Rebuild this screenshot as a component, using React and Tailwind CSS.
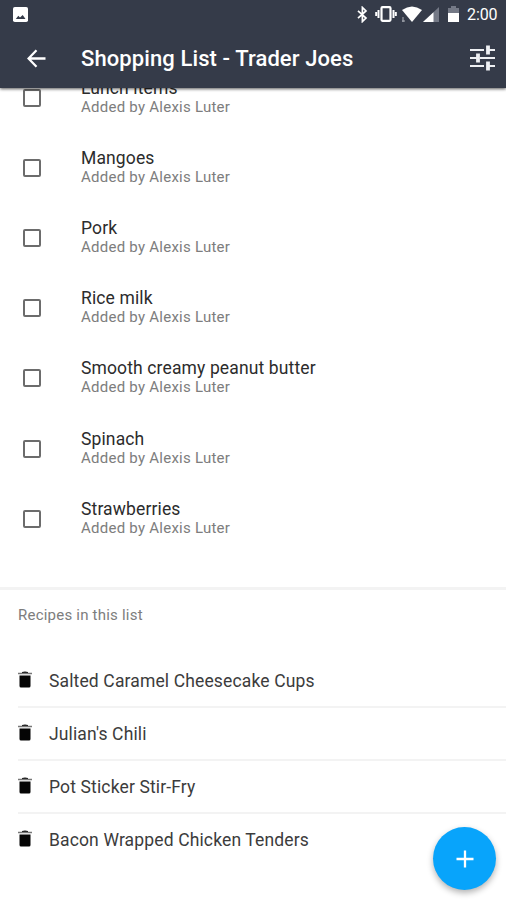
const items = [
  'Lunch items',
  'Mangoes',
  'Pork',
  'Rice milk',
  'Smooth creamy peanut butter',
  'Spinach',
  'Strawberries',
];

const recipes = [
  'Salted Caramel Cheesecake Cups',
  "Julian's Chili",
  'Pot Sticker Stir-Fry',
  'Bacon Wrapped Chicken Tenders',
];

function StatusBar() {
  return (
    <div className="flex h-7 items-center pl-[13px] pr-[8px] text-white">
      <svg className="size-[15px]" viewBox="0 0 15 15">
        <rect width="15" height="15" rx="1.8" fill="#fff" />
        <path d="M2.800 12l2.500-3.200 1.700 1.700 2.700-2.500 2.800 4z" fill="#353b49" />
      </svg>
      <div className="ml-auto flex items-center">
        <svg className="h-[17px] w-[11px]" viewBox="0 0 11 17" fill="none" stroke="#fff" strokeWidth="1.7">
          <path d="M1 4.800l8 7.200-3.600 3.500V1.500L9 5l-8 7.200" />
        </svg>
        <svg className="ml-[7px] h-4 w-[22px]" viewBox="0 0 22 16" fill="none" stroke="#fff">
          <rect x="6.500" y="1.200" width="9" height="13.600" rx="1" strokeWidth="2.200" />
          <path d="M3.500 4v8M18.500 4v8" strokeWidth="2" />
          <path d="M1.200 6v4M20.800 6v4" strokeWidth="2" />
        </svg>
        <svg className="ml-[5px] h-4 w-5" viewBox="0 0 20 16">
          <path d="M0 4Q10-3 20 4L10 16z" fill="#fff" />
          <path d="M1 11v5M0 15h3" stroke="#aeb1b8" />
        </svg>
        <svg className="ml-[1px] h-[15px] w-4" viewBox="0 0 16 15">
          <path d="M16 0v15H0z" fill="#747986" />
          <path d="M10.500 5.200V15H0z" fill="#fff" />
        </svg>
        <svg className="ml-[9px] h-4 w-[11px]" viewBox="0 0 11 16">
          <path d="M3 0h5v2h3v5H0V2h3z" fill="#747986" />
          <path d="M0 7h11v9H0z" fill="#fff" />
        </svg>
        <span className="ml-[8px] w-[31px] whitespace-nowrap pt-[2px] text-[16px] leading-4 tracking-[-0.1px]">2:00</span>
      </div>
    </div>
  );
}

function AppBar() {
  return (
    <div className="flex h-[60px] items-center pl-[27px] pr-[11px] text-white">
      <svg className="size-[19px]" viewBox="0 0 19 19" fill="none" stroke="#fff" strokeWidth="2.300">
        <path d="M18.500 9.500H2M9.500 1.200L1.500 9.500l8 8.300" />
      </svg>
      <h1 className="ml-[35px] whitespace-nowrap pt-[2px] text-[22px] font-medium leading-7 tracking-[0.1px]">
        Shopping List - Trader Joes
      </h1>
      <svg className="ml-auto h-[26px] w-[25px]" viewBox="0 0 25 26" fill="none" stroke="#eef0f3">
        <path d="M0 5h14M19 5h6M0 13h5.500M10 13h15M0 21h14M19 21h6" strokeWidth="2.200" />
        <path d="M18 .5v9M8 8.500v9M18 16.500v9" strokeWidth="3.800" />
        <path d="M18 5h7M0 13h8M18 21h7" strokeWidth="2" />
      </svg>
    </div>
  );
}

function ShoppingItem({ name }) {
  return (
    <li className="flex h-[70.1px] items-center pl-[23px]">
      <span className="size-[18px] shrink-0 rounded-[2px] border-2 border-[#6c6c6c]" />
      <div className="ml-[40px] whitespace-nowrap pb-[1px]">
        <div className="text-[17.5px] leading-5 tracking-[0.13px] text-[#2c2c2c]">{name}</div>
        <div className="text-[15px] leading-[19px] tracking-[0.25px] text-[#7d7d7d]">Added by Alexis Luter</div>
      </div>
    </li>
  );
}

function Recipe({ name, last }) {
  return (
    <li className={`ml-[18px] flex h-[53px] items-center border-b-2 ${last ? 'border-transparent' : 'border-[#f3f3f3]'}`}>
      <svg className="mb-[2px] h-[17px] w-[14px]" viewBox="0 0 14 17">
        <path d="M4 1Q7 0 10 1v2H4z" fill="#111" />
        <path d="M0 2.500h14" stroke="#777" strokeWidth="1.500" />
        <path d="M1.500 4.500h11V15q0 1.500-1.500 1.500H3Q1.500 16.500 1.500 15z" fill="#050505" />
      </svg>
      <span className="ml-[17px] whitespace-nowrap text-[17.5px] leading-5 tracking-[0.14px] text-[#3c3c3c]">{name}</span>
    </li>
  );
}

export default function App() {
  return (
    <div className="relative flex h-[900px] w-[506px] flex-col overflow-hidden bg-white font-['Roboto',sans-serif]">
      <header className="relative z-10 h-[88px] shrink-0 bg-[#353b49] shadow-[0_1px_3px_rgba(0,0,0,0.65)]">
        <StatusBar />
        <AppBar />
      </header>
      <ul className="-mt-[25px] h-[527px] shrink-0 border-b-[3px] border-[#f3f3f3]">
        {items.map((name) => (
          <ShoppingItem key={name} name={name} />
        ))}
      </ul>
      <section className="pt-[15px]">
        <h2 className="pl-[18px] text-[15px] leading-5 tracking-[0.22px] text-[#7d7d7d]">Recipes in this list</h2>
        <ul className="mt-[30px]">
          {recipes.map((name, i) => (
            <Recipe key={name} name={name} last={i === recipes.length - 1} />
          ))}
        </ul>
      </section>
      <button
        aria-label="Add item"
        className="absolute left-[433px] top-[827px] flex size-[63px] items-center justify-center rounded-full bg-[#08a4fb] shadow-[0_3px_6px_rgba(0,0,0,0.3)]"
      >
        <svg className="size-[18px]" viewBox="0 0 18 18" stroke="#fff" strokeWidth="2.300">
          <path d="M9 .5v17M.5 9h17" />
        </svg>
      </button>
    </div>
  );
}
